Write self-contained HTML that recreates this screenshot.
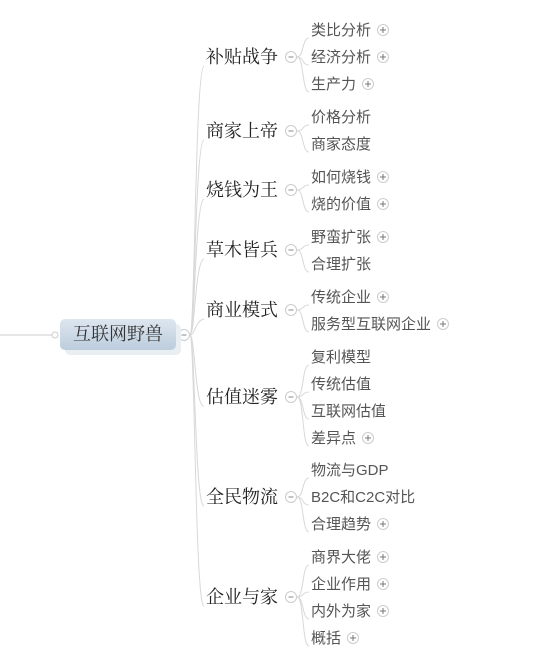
<!DOCTYPE html>
<html><head><meta charset="utf-8"><style>
body{margin:0;width:547px;height:659px;background:#fff;position:relative;overflow:hidden;font-family:"Liberation Sans","Noto Serif CJK SC","Noto Sans CJK SC",sans-serif}
.t{position:absolute;font-size:18px;color:#222;line-height:20px;white-space:nowrap;font-family:"Liberation Serif","Noto Serif CJK SC",serif}
.s{position:absolute;font-size:15px;color:#555;line-height:18px;white-space:nowrap;font-family:"Liberation Sans","Noto Sans CJK SC",sans-serif}
.root{position:absolute;left:60px;top:319px;width:116px;height:31px;border-radius:5px;background:linear-gradient(#dde6ef,#bccddd);box-shadow:5px 5px 0 #e9eef3;font-family:"Liberation Serif","Noto Serif CJK SC",serif;font-size:18px;line-height:31px;text-align:center;color:#333}
</style></head><body>
<svg width="547" height="659" style="position:absolute;left:0;top:0" fill="none" stroke="#d8d8d8" stroke-width="1">
<line x1="0" y1="335" x2="55" y2="335" stroke="#ccc"/>
<circle cx="55" cy="335" r="3" fill="#fff" stroke="#ccc"/>
<g id="m"></g>
</svg>
<div class="root">互联网野兽</div>
<script>
const T=[["补贴战争",57,[["类比分析",30,1],["经济分析",57,1],["生产力",84,1]]],
["商家上帝",131,[["价格分析",117,0],["商家态度",144,0]]],
["烧钱为王",190,[["如何烧钱",177,1],["烧的价值",204,1]]],
["草木皆兵",250,[["野蛮扩张",237,1],["合理扩张",264,0]]],
["商业模式",310,[["传统企业",297,1],["服务型互联网企业",324,1]]],
["估值迷雾",397,[["复利模型",357,0],["传统估值",384,0],["互联网估值",411,0],["差异点",438,1]]],
["全民物流",497,[["物流与GDP",470,0],["B2C和C2C对比",497,0],["合理趋势",524,1]]],
["企业与家",597,[["商界大佬",557,1],["企业作用",584,1],["内外为家",611,1],["概括",638,1]]]];
let svg='';let html='';
svg+='<circle cx="184" cy="335" r="5.5" fill="#fff" stroke="#ccc"/><line x1="181.5" y1="335" x2="186.5" y2="335" stroke="#888"/>';
function w(s,fs){let n=0;for(const c of s){n+=/[\x00-\x7f]/.test(c)?fs*0.62:fs;}return n;}
for(const [name,y,subs] of T){
 const by=y+11;
 svg+=`<path d="M190,335 C195,335 195,${by} 204,${by-2}" />`;
 html+=`<div class="t" style="left:206px;top:${y-10}px">${name}</div>`;
 svg+=`<circle cx="291" cy="${y}" r="5.5" fill="#fff" stroke="#ccc"/><line x1="288.5" y1="${y}" x2="293.5" y2="${y}" stroke="#888"/>`;
 for(const [sn,sy,p] of subs){
  const sb=sy+8;const wd=w(sn,15);
  svg+=`<path d="M297,${y} C304,${y} 302,${sb} 309,${sb}" />`;
  html+=`<div class="s" style="left:311px;top:${sy-8}px">${sn}</div>`;
  if(p){const cx=311+wd+12;svg+=`<circle cx="${cx}" cy="${sy}" r="5.5" fill="#fff" stroke="#ccc"/><path d="M${cx-3},${sy} h6 M${cx},${sy-3} v6" stroke="#777"/>`;}
 }
}
document.getElementById('m').innerHTML=svg;
document.body.insertAdjacentHTML('beforeend',html);
</script>
</body></html>
